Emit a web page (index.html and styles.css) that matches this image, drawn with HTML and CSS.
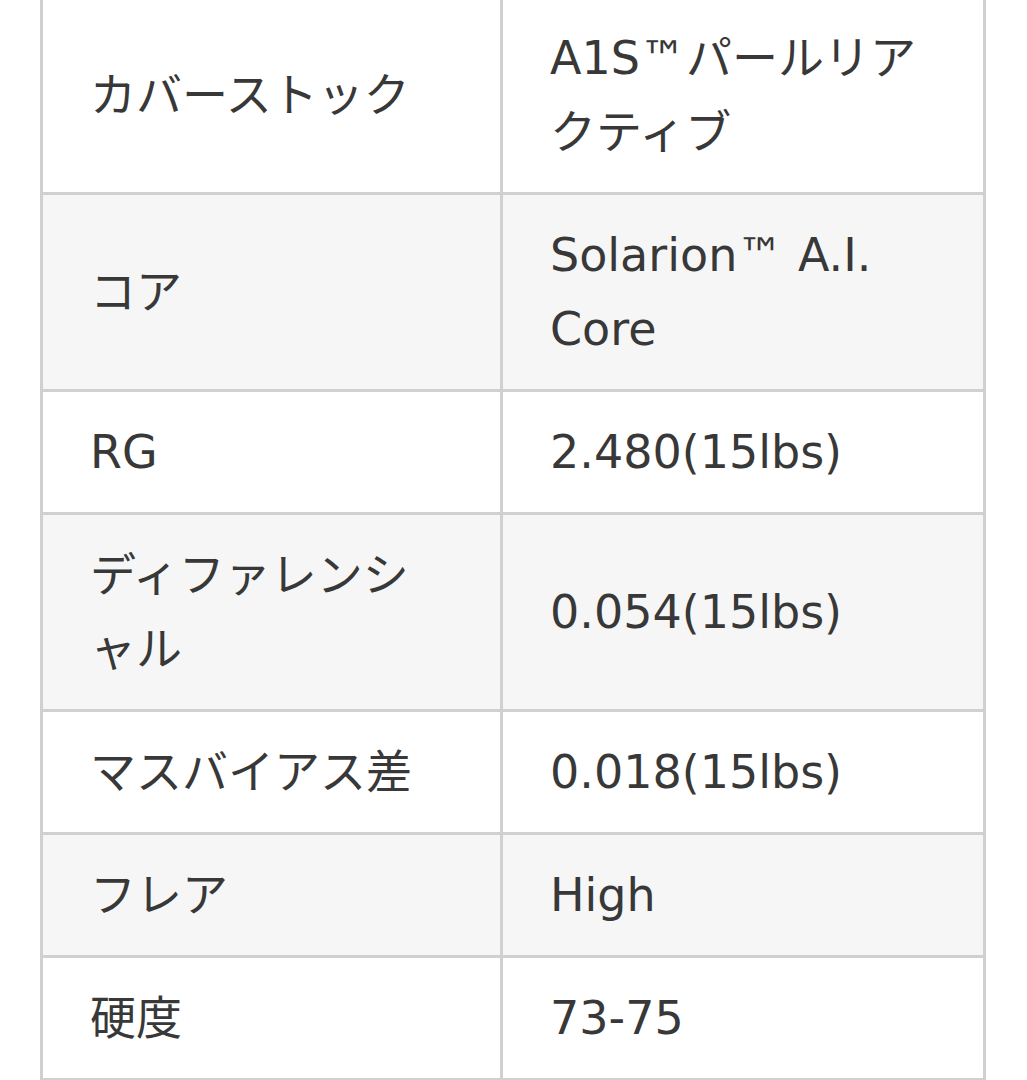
FILE: index.html
```html
<!DOCTYPE html>
<html lang="ja">
<head>
<meta charset="utf-8">
<link rel="stylesheet" href="styles.css">
</head>
<body>
<table class="spec">
  <tbody>
    <tr><td>カバーストック</td><td>A1S™パールリアクティブ</td></tr>
    <tr><td>コア</td><td>Solarion™ A.I. Core</td></tr>
    <tr><td>RG</td><td>2.480(15lbs)</td></tr>
    <tr><td>ディファレンシャル</td><td>0.054(15lbs)</td></tr>
    <tr><td>マスバイアス差</td><td>0.018(15lbs)</td></tr>
    <tr><td>フレア</td><td>High</td></tr>
    <tr><td>硬度</td><td>73-75</td></tr>
  </tbody>
</table>
</body>
</html>
```
FILE: styles.css
```css
html, body {
  margin: 0;
  padding: 0;
  background: #ffffff;
}
body {
  font-family: "DejaVu Sans", "Noto Sans CJK JP", sans-serif;
  color: #383838;
}
.spec {
  margin: -5px 0 0 40px;
  width: 946px;
  table-layout: fixed;
  border-collapse: separate;
  border-spacing: 0;
  border-top: 3px solid #d0d0d0;
  border-left: 3px solid #d0d0d0;
}
.spec td {
  box-sizing: border-box;
  padding: 23px 47px;
  font-size: 46px;
  line-height: 74px;
  font-weight: 400;
  vertical-align: middle;
  border-right: 3px solid #d0d0d0;
  border-bottom: 3px solid #d0d0d0;
  line-break: loose;
}
.spec td:first-child {
  width: 460px;
}
.spec tr:nth-child(even) td {
  background: #f6f6f6;
}
```
